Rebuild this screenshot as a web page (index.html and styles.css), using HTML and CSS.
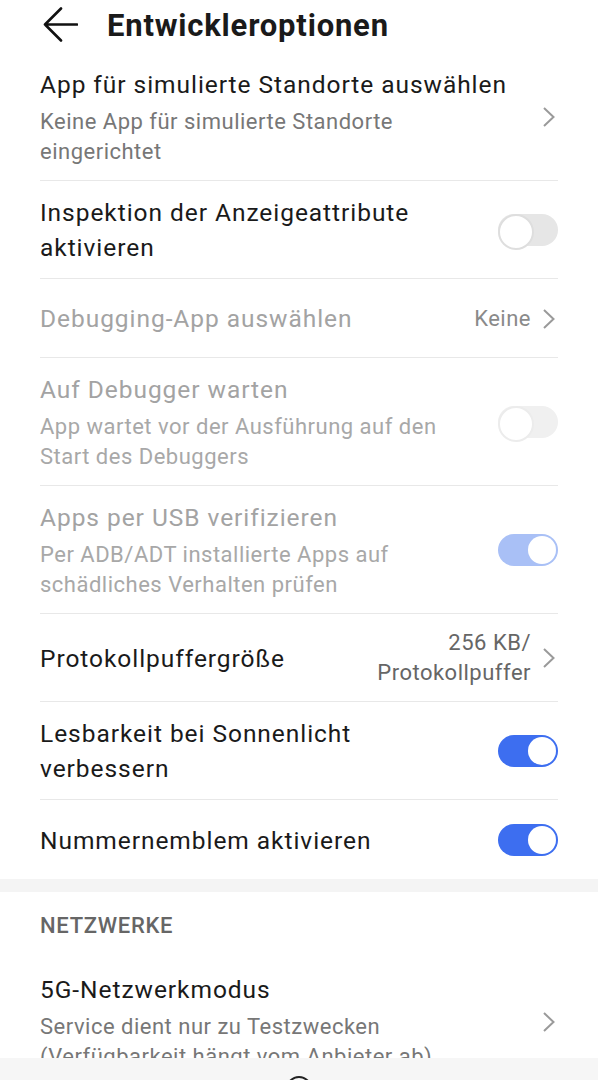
FILE: index.html
```html
<!DOCTYPE html>
<html lang="de">
<head>
    <meta charset="UTF-8">
    <meta name="viewport" content="width=device-width, initial-scale=1.0">
    <title>Entwickleroptionen</title>
    <link rel="stylesheet" href="styles.css">
</head>
<body>

<header class="topbar">
    <svg class="back" width="36" height="36" viewBox="0 0 36 36">
        <path d="M35 17.5H3M19 1.5L3 17.5L19 33.5" fill="none" stroke="#111" stroke-width="2.6" stroke-linecap="round" stroke-linejoin="round"/>
    </svg>
    <h1>Entwickleroptionen</h1>
</header>

<div class="list">

    <div class="row">
        <div class="text">
            <div class="title">App für simulierte Standorte auswählen</div>
            <div class="sub">Keine App für simulierte Standorte<br>eingerichtet</div>
        </div>
        <svg class="chevron" width="14" height="22" viewBox="0 0 14 22"><path d="M2 2l9.5 9-9.5 9" fill="none" stroke="#9a9a9a" stroke-width="2"/></svg>
    </div>

    <div class="row">
        <div class="text">
            <div class="title">Inspektion der Anzeigeattribute<br>aktivieren</div>
        </div>
        <span class="switch"></span>
    </div>

    <div class="row disabled">
        <div class="text">
            <div class="title">Debugging-App auswählen</div>
        </div>
        <span class="value">Keine</span>
        <svg class="chevron" width="14" height="22" viewBox="0 0 14 22"><path d="M2 2l9.5 9-9.5 9" fill="none" stroke="#9a9a9a" stroke-width="2"/></svg>
    </div>

    <div class="row disabled">
        <div class="text">
            <div class="title">Auf Debugger warten</div>
            <div class="sub">App wartet vor der Ausführung auf den<br>Start des Debuggers</div>
        </div>
        <span class="switch"></span>
    </div>

    <div class="row disabled">
        <div class="text">
            <div class="title">Apps per USB verifizieren</div>
            <div class="sub">Per ADB/ADT installierte Apps auf<br>schädliches Verhalten prüfen</div>
        </div>
        <span class="switch on"></span>
    </div>

    <div class="row">
        <div class="text">
            <div class="title">Protokollpuffergröße</div>
        </div>
        <span class="value two">256 KB/<br>Protokollpuffer</span>
        <svg class="chevron" width="14" height="22" viewBox="0 0 14 22"><path d="M2 2l9.5 9-9.5 9" fill="none" stroke="#9a9a9a" stroke-width="2"/></svg>
    </div>

    <div class="row">
        <div class="text">
            <div class="title">Lesbarkeit bei Sonnenlicht<br>verbessern</div>
        </div>
        <span class="switch on"></span>
    </div>

    <div class="row last">
        <div class="text">
            <div class="title">Nummernemblem aktivieren</div>
        </div>
        <span class="switch on"></span>
    </div>

</div>

<div class="band"></div>

<div class="list">
    <div class="section">NETZWERKE</div>

    <div class="row last">
        <div class="text">
            <div class="title">5G-Netzwerkmodus</div>
            <div class="sub">Service dient nur zu Testzwecken<br>(Verfügbarkeit hängt vom Anbieter ab)</div>
        </div>
        <svg class="chevron" width="14" height="22" viewBox="0 0 14 22"><path d="M2 2l9.5 9-9.5 9" fill="none" stroke="#9a9a9a" stroke-width="2"/></svg>
    </div>
</div>

<!-- Navigationsleiste -->
<div class="navbar">
    <span class="home"></span>
</div>

</body>
</html>
```

FILE: styles.css
```css
* {
    margin: 0;
    padding: 0;
    box-sizing: border-box;
}

body {
    font-family: 'Roboto', 'Noto Sans', sans-serif;
    background-color: #fff;
    color: #1a1a1a;
    height: 1080px;
    overflow: hidden;
}

.topbar {
    height: 53px;
    display: flex;
    align-items: center;
    padding-left: 42px;
}

.topbar .back {
    margin-top: -3px;
}

.topbar h1 {
    font-size: 31px;
    font-weight: 700;
    letter-spacing: 0.8px;
    margin-left: 29px;
    margin-top: -2px;
    color: #1a1a1a;
}

.list {
    padding: 0 40px;
}

.row {
    display: flex;
    align-items: center;
    min-height: 79px;
    padding: 14px 0 13px;
    border-bottom: 1px solid #e8e8e8;
}

.row.last {
    border-bottom: none;
}

.text {
    flex: 1;
}

.title {
    font-size: 24.5px;
    line-height: 35px;
    letter-spacing: 0.95px;
}

.sub {
    font-size: 22px;
    line-height: 30px;
    letter-spacing: 0.5px;
    margin-top: 5px;
    color: #777;
}

.disabled .title {
    color: #a3a3a3;
}

.disabled .sub {
    color: #a8a8a8;
}

.value {
    font-size: 22px;
    line-height: 30px;
    letter-spacing: 0.5px;
    color: #8a8a8a;
    margin-right: 11px;
    text-align: right;
}

.value.two {
    color: #666;
}

.chevron {
    margin-right: 2px;
}

.switch {
    position: relative;
    width: 60px;
    height: 32px;
    border-radius: 16px;
    background-color: #e6e6e6;
    margin-left: 20px;
    flex-shrink: 0;
}

.switch::after {
    content: '';
    position: absolute;
    top: 0;
    left: 0;
    width: 32px;
    height: 32px;
    border-radius: 50%;
    background-color: #fff;
    border: 2px solid #dedede;
}

.switch.on {
    background-color: #3d6ef0;
}

.switch.on::after {
    left: auto;
    right: 2px;
    top: 2px;
    width: 28px;
    height: 28px;
    border: none;
}

.disabled .switch {
    background-color: #f0f0f0;
}

.disabled .switch::after {
    border-color: #ececec;
}

.disabled .switch.on {
    background-color: #a9c0f6;
}

.band {
    height: 13px;
    background-color: #f4f4f4;
}

.section {
    font-size: 22px;
    font-weight: 500;
    letter-spacing: 0.7px;
    color: #666;
    line-height: 24px;
    padding: 22px 0 20px;
}

.navbar {
    position: fixed;
    left: 0;
    bottom: 0;
    width: 100%;
    height: 22px;
    background-color: #f6f6f6;
    overflow: hidden;
    display: flex;
    justify-content: center;
}

.navbar .home {
    width: 26px;
    height: 26px;
    border: 2.5px solid #222;
    border-radius: 50%;
    margin-top: 18px;
}
```
